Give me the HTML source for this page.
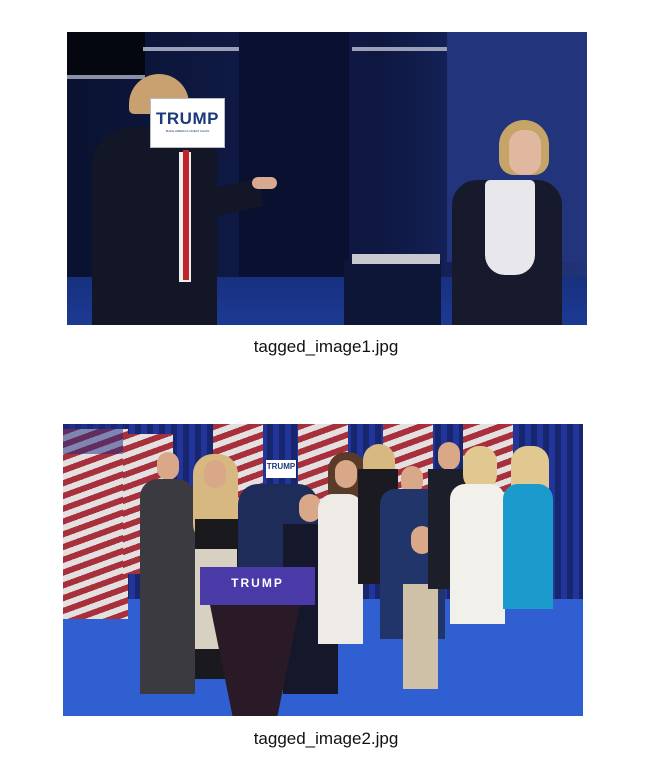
<!DOCTYPE html>
<html><head><meta charset="utf-8"><style>
body{margin:0;background:#fff;width:652px;height:773px;position:relative;overflow:hidden;font-family:"Liberation Sans",sans-serif}
.a{position:absolute}
.cap{position:absolute;left:0;width:652px;text-align:center;font-size:17px;color:#111}
.fl{background:repeating-linear-gradient(160deg,#a8303c 0 6px,#e4e0e0 6px 12px)}
.h{position:absolute;width:22px;height:28px;border-radius:11px;background:#d9a888}
</style></head><body>
<!-- Image 1 -->
<div class="a" style="left:67px;top:32px;width:520px;height:293px;background:#0c1535;overflow:hidden">
 <div class="a" style="left:0;top:0;width:520px;height:293px;background:linear-gradient(90deg,#0a1230 0%,#101b48 40%,#0d1740 60%,#1a2a6a 85%,#223478 100%)"></div>
 <div class="a" style="left:0;top:0;width:78px;height:45px;background:#04070f"></div>
 <div class="a" style="left:0;top:43px;width:78px;height:4px;background:#8a90a8"></div>
 <div class="a" style="left:76px;top:15px;width:96px;height:4px;background:#9aa0b8"></div>
 <div class="a" style="left:285px;top:15px;width:95px;height:4px;background:#9aa0b8"></div>
 <div class="a" style="left:172px;top:0;width:110px;height:250px;background:#0a1130"></div>
 <div class="a" style="left:380px;top:0;width:140px;height:230px;background:#22357c"></div>
 <div class="a" style="left:0;top:245px;width:520px;height:48px;background:linear-gradient(#17307f,#1d3a93)"></div>
 <div class="a" style="left:62px;top:42px;width:60px;height:40px;background:#c9a070;border-radius:30px 30px 5px 5px"></div>
 <div class="a" style="left:25px;top:95px;width:125px;height:198px;background:#121626;border-radius:40px 30px 0 0"></div>
 <div class="a" style="left:110px;top:155px;width:85px;height:28px;background:#121626;transform:rotate(-12deg)"></div>
 <div class="a" style="left:185px;top:145px;width:25px;height:12px;background:#d8a890;border-radius:6px"></div>
 <div class="a" style="left:112px;top:120px;width:12px;height:130px;background:#eee"></div>
 <div class="a" style="left:116px;top:118px;width:6px;height:130px;background:#c0242a"></div>
 <div class="a" style="left:83px;top:66px;width:75px;height:50px;background:#fff;border:1px solid #bbb;box-sizing:border-box;text-align:center">
  <div style="font-weight:bold;color:#1c3a7a;font-size:17px;margin-top:10px;letter-spacing:.5px">TRUMP</div>
  <div style="font-size:3px;color:#1c3a7a">MAKE AMERICA GREAT AGAIN</div>
 </div>
 <div class="a" style="left:277px;top:228px;width:97px;height:65px;background:#0e1638"></div>
 <div class="a" style="left:285px;top:222px;width:88px;height:10px;background:#c8c8d0"></div>
 <div class="a" style="left:432px;top:88px;width:50px;height:55px;background:#c6a468;border-radius:25px 25px 15px 15px"></div>
 <div class="a" style="left:442px;top:98px;width:32px;height:45px;background:#e0b8a0;border-radius:14px"></div>
 <div class="a" style="left:385px;top:148px;width:110px;height:145px;background:#161a2c;border-radius:25px 25px 0 0"></div>
 <div class="a" style="left:418px;top:148px;width:50px;height:95px;background:#e8e8ec;border-radius:5px 5px 20px 20px"></div>
</div>
<div class="cap" style="top:337px">tagged_image1.jpg</div>

<!-- Image 2 -->
<div class="a" style="left:63px;top:424px;width:520px;height:292px;background:#1c2f86;overflow:hidden">
 <div class="a" style="left:0;top:0;width:520px;height:180px;background:repeating-linear-gradient(90deg,#18266e 0 6px,#22359a 6px 12px)"></div>
 <div class="a" style="left:0;top:175px;width:520px;height:117px;background:#2f5fd0"></div>
 <div class="a fl" style="left:0;top:5px;width:65px;height:190px"></div>
 <div class="a fl" style="left:60px;top:10px;width:50px;height:140px"></div>
 <div class="a fl" style="left:150px;top:0;width:50px;height:110px"></div>
 <div class="a fl" style="left:235px;top:0;width:50px;height:100px"></div>
 <div class="a fl" style="left:320px;top:0;width:50px;height:100px"></div>
 <div class="a fl" style="left:400px;top:0;width:50px;height:80px"></div>
 <div class="a" style="left:0;top:0;width:60px;height:30px;background:#1a2a80;opacity:.5"></div>
 <!-- people -->
 <div class="h" style="left:94px;top:28px"></div>
 <div class="a" style="left:77px;top:55px;width:55px;height:215px;background:#3a3a40;border-radius:18px 18px 0 0"></div>
 <div class="a" style="left:130px;top:30px;width:45px;height:90px;background:#d7b880;border-radius:20px"></div>
 <div class="h" style="left:141px;top:36px"></div>
 <div class="a" style="left:132px;top:95px;width:45px;height:160px;background:#1a1a1e"></div>
 <div class="a" style="left:132px;top:125px;width:42px;height:100px;background:#d8d0c0"></div>
 <div class="a" style="left:175px;top:60px;width:80px;height:110px;background:#1e2c5a;border-radius:20px 20px 0 0"></div>
 <div class="a" style="left:203px;top:36px;width:30px;height:18px;background:#fff;font-weight:bold;color:#1c3a7a;font-size:8px;text-align:center;line-height:14px">TRUMP</div>
 <div class="h" style="left:236px;top:70px"></div>
 <div class="a" style="left:220px;top:100px;width:55px;height:170px;background:#15182a"></div>
 <div class="a" style="left:137px;top:143px;width:115px;height:38px;background:#4a3aa8;color:#fff;font-weight:bold;font-size:12px;letter-spacing:2px;text-align:center;line-height:32px">TRUMP</div>
 <div class="a" style="left:147px;top:181px;width:90px;height:111px;background:#2a1a28;clip-path:polygon(0 0,100% 0,75% 100%,25% 100%)"></div>
 <div class="a" style="left:265px;top:28px;width:38px;height:60px;background:#5a3a28;border-radius:18px"></div>
 <div class="h" style="left:272px;top:36px"></div>
 <div class="a" style="left:255px;top:70px;width:45px;height:150px;background:#eeeae6;border-radius:15px 15px 0 0"></div>
 <div class="a" style="left:300px;top:20px;width:32px;height:40px;background:#d7b880;border-radius:16px"></div>
 <div class="a" style="left:295px;top:45px;width:40px;height:115px;background:#1a1a20"></div>
 <div class="h" style="left:338px;top:42px"></div>
 <div class="a" style="left:317px;top:65px;width:65px;height:150px;background:#22356a;border-radius:15px 15px 0 0"></div>
 <div class="h" style="left:348px;top:102px"></div>
 <div class="a" style="left:340px;top:160px;width:35px;height:105px;background:#cfc0a8"></div>
 <div class="h" style="left:375px;top:18px"></div>
 <div class="a" style="left:365px;top:45px;width:40px;height:120px;background:#1c1e2a"></div>
 <div class="a" style="left:400px;top:22px;width:34px;height:45px;background:#e0c890;border-radius:16px"></div>
 <div class="a" style="left:387px;top:60px;width:55px;height:140px;background:#f2f0ea;border-radius:15px 15px 0 0"></div>
 <div class="a" style="left:448px;top:22px;width:38px;height:60px;background:#e0c890;border-radius:16px"></div>
 <div class="a" style="left:440px;top:60px;width:50px;height:125px;background:#1a9bcc;border-radius:15px 15px 0 0"></div>
</div>
<div class="cap" style="top:729px">tagged_image2.jpg</div>
</body></html>
